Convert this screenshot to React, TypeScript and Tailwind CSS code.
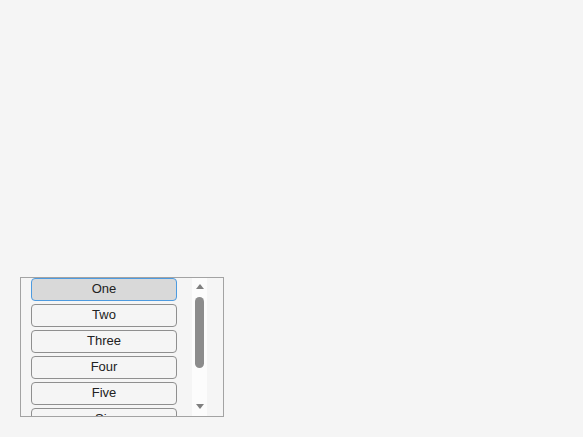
import React from "react";

const items = ["One", "Two", "Three", "Four", "Five", "Six"];

export default function App() {
  return (
    <div
      className="w-[583px] h-[437px] bg-[#f5f5f5] pt-[277px] pl-[20px]"
      style={{ fontFamily: '"Liberation Sans", Arial, sans-serif' }}
    >
      <div className="w-[204px] h-[140px] border border-[#a3a3a3] flex overflow-hidden">
        <div className="flex flex-col gap-[3px] pl-[10px] w-[171px] h-full overflow-hidden">
          {items.map((t, i) => (
            <div
              key={t}
              className={
                i === 0
                  ? "shrink-0 w-[146px] h-[23px] rounded-[4px] border border-[#4d9be0] bg-[#d9d9d9] flex items-center justify-center pb-[2px] text-[13px] leading-[15px] text-[#222]"
                  : "shrink-0 w-[146px] h-[23px] rounded-[4px] border border-[#8f8f8f] bg-[#f5f5f5] flex items-center justify-center pb-[2px] text-[13px] leading-[15px] text-[#222]"
              }
            >
              {t}
            </div>
          ))}
        </div>
        <div className="w-[15px] h-full bg-[#fcfcfc] flex flex-col items-center pt-[6px]">
          <div className="w-0 h-0 border-l-[4px] border-r-[4px] border-b-[5px] border-l-transparent border-r-transparent border-b-[#7f7f7f]" />
          <div className="mt-[8px] w-[9px] h-[71px] rounded-full bg-[#8c8c8c]" />
          <div className="mt-[36px] w-0 h-0 border-l-[4px] border-r-[4px] border-t-[5px] border-l-transparent border-r-transparent border-t-[#7f7f7f]" />
        </div>
      </div>
    </div>
  );
}
